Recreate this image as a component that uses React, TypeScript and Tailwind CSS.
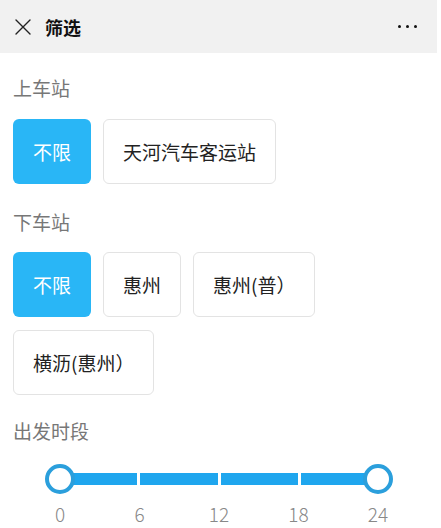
import React from "react";

const font = { fontFamily: '"Noto Sans CJK SC", "Noto Sans", sans-serif' };

function Chip({ label, active = false }: { label: string; active?: boolean }) {
  return (
    <div
      className={
        active
          ? "h-[65px] px-[20px] flex items-center rounded-[6px] bg-[#29b6f6] text-white text-[19px] leading-none"
          : "h-[65px] px-[19px] flex items-center rounded-[6px] border border-[#e3e3e3] bg-white text-[#222] text-[19px] leading-none"
      }
    >
      {label}
    </div>
  );
}

export default function App() {
  const ticks = ["0", "6", "12", "18", "24"];
  return (
    <div className="w-[441px] h-[528px] bg-white overflow-hidden" style={font}>
      <div className="w-[437px] h-[53px] bg-[#f1f1f1] flex items-center pl-[15px] pr-[20px]">
        <svg width="16" height="16" viewBox="0 0 16 16" className="shrink-0">
          <path d="M1 1 L15 15 M15 1 L1 15" stroke="#222" strokeWidth="1.4" strokeLinecap="round" />
        </svg>
        <span className="ml-[14px] text-[18px] font-bold text-[#111] leading-none">筛选</span>
        <div className="ml-auto flex items-center gap-[5px]">
          <span className="block w-[3px] h-[3px] rounded-full bg-[#111]" />
          <span className="block w-[3px] h-[3px] rounded-full bg-[#111]" />
          <span className="block w-[3px] h-[3px] rounded-full bg-[#111]" />
        </div>
      </div>

      <div className="pl-[13px]">
        <div className="mt-[22px] h-[24px] flex items-center text-[19px] text-[#777] leading-none">上车站</div>
        <div className="mt-[20px] flex gap-[12px]">
          <Chip label="不限" active />
          <Chip label="天河汽车客运站" />
        </div>

        <div className="mt-[25px] h-[24px] flex items-center text-[19px] text-[#777] leading-none">下车站</div>
        <div className="mt-[19px] flex flex-wrap gap-x-[12px] gap-y-[13px] w-[420px]">
          <Chip label="不限" active />
          <Chip label="惠州" />
          <Chip label="惠州(普）" />
          <Chip label="横沥(惠州）" />
        </div>

        <div className="mt-[23px] h-[24px] flex items-center text-[19px] text-[#777] leading-none">出发时段</div>
      </div>

      <div className="ml-[45px] w-[348px] mt-[22px]">
        <div className="relative h-[30px]">
          <div className="absolute left-[15px] right-[15px] top-[9px] h-[12px] flex gap-[3px]">
            <div className="flex-1 bg-[#1fa6ee]" />
            <div className="flex-1 bg-[#1fa6ee]" />
            <div className="flex-1 bg-[#1fa6ee]" />
            <div className="flex-1 bg-[#1fa6ee]" />
          </div>
          <div className="absolute left-0 top-0 w-[30px] h-[30px] rounded-full border-[4px] border-[#2b9fdc] bg-white" />
          <div className="absolute right-0 top-0 w-[30px] h-[30px] rounded-full border-[4px] border-[#2b9fdc] bg-white" />
        </div>
        <div className="mt-[8px] flex justify-between">
          {ticks.map((t) => (
            <div key={t} className="w-[30px] text-center text-[19px] leading-[24px] font-light text-[#888]">
              {t}
            </div>
          ))}
        </div>
      </div>
    </div>
  );
}
